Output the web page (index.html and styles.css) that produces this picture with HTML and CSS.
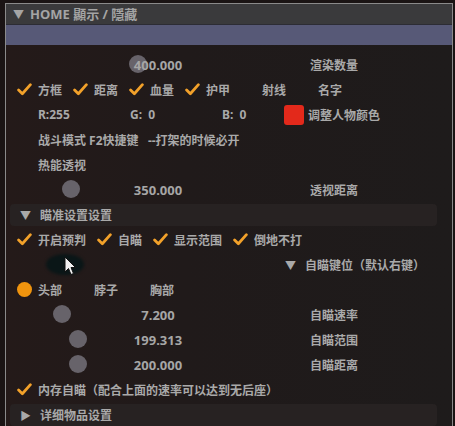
FILE: index.html
```html
<!DOCTYPE html>
<html lang="zh">
<head>
  <meta charset="UTF-8">
  <meta name="viewport" content="width=device-width, initial-scale=1.0">
  <title>HOME 顯示 / 隱藏</title>
  <link rel="stylesheet" href="styles.css">
</head>
<body>
  <div class="window">
    <div class="titlebar"><span class="tri">▼</span>HOME 顯示 / 隱藏</div>
    <div class="band"></div>

    <div class="content">
      <div class="row">
        <div class="slider"><span class="grab" style="left: 113px"></span><span class="value">400.000</span></div>
        <span class="slider-label">渲染数量</span>
      </div>

      <div class="row options">
        <span class="opt"><span class="box"><svg viewBox="0 0 14 12"><polyline points="1.5,6.5 5,10 12.5,1.5"/></svg></span>方框</span>
        <span class="opt"><span class="box"><svg viewBox="0 0 14 12"><polyline points="1.5,6.5 5,10 12.5,1.5"/></svg></span>距离</span>
        <span class="opt"><span class="box"><svg viewBox="0 0 14 12"><polyline points="1.5,6.5 5,10 12.5,1.5"/></svg></span>血量</span>
        <span class="opt"><span class="box"><svg viewBox="0 0 14 12"><polyline points="1.5,6.5 5,10 12.5,1.5"/></svg></span>护甲</span>
        <span class="opt"><span class="box"></span>射线</span>
        <span class="opt"><span class="box"></span>名字</span>
      </div>

      <div class="row indent">
        <span class="rgb rgb-r">R:255</span>
        <span class="rgb">G:&nbsp; 0</span>
        <span class="rgb rgb-b">B:&nbsp; 0</span>
        <span class="swatch"></span>
        <span class="swatch-label">调整人物颜色</span>
      </div>

      <div class="row indent">战斗模式 F2快捷键&nbsp;&nbsp; --打架的时候必开</div>
      <div class="row indent">热能透视</div>

      <div class="row">
        <div class="slider"><span class="grab" style="left: 46px"></span><span class="value">350.000</span></div>
        <span class="slider-label">透视距离</span>
      </div>

      <div class="row header"><span class="tri">▼</span>瞄准设置设置</div>

      <div class="row options">
        <span class="opt"><span class="box"><svg viewBox="0 0 14 12"><polyline points="1.5,6.5 5,10 12.5,1.5"/></svg></span>开启预判</span>
        <span class="opt"><span class="box"><svg viewBox="0 0 14 12"><polyline points="1.5,6.5 5,10 12.5,1.5"/></svg></span>自瞄</span>
        <span class="opt"><span class="box"><svg viewBox="0 0 14 12"><polyline points="1.5,6.5 5,10 12.5,1.5"/></svg></span>显示范围</span>
        <span class="opt"><span class="box"><svg viewBox="0 0 14 12"><polyline points="1.5,6.5 5,10 12.5,1.5"/></svg></span>倒地不打</span>
      </div>

      <div class="row keybind">
        <span class="blob"></span>
        <svg class="cursor" viewBox="0 0 12 20"><path d="M1 1 L1 16 L4.5 12.5 L7 18.5 L9.5 17.5 L7 11.5 L11.5 11.5 Z"/></svg>
        <span class="subnode"><span class="tri">▼</span>自瞄键位（默认右键）</span>
      </div>

      <div class="row options">
        <span class="opt"><span class="box"><span class="radio"></span></span>头部</span>
        <span class="opt"><span class="box"></span>脖子</span>
        <span class="opt"><span class="box"></span>胸部</span>
      </div>

      <div class="row">
        <div class="slider"><span class="grab" style="left: 37px"></span><span class="value">7.200</span></div>
        <span class="slider-label">自瞄速率</span>
      </div>
      <div class="row">
        <div class="slider"><span class="grab" style="left: 53px"></span><span class="value">199.313</span></div>
        <span class="slider-label">自瞄范围</span>
      </div>
      <div class="row">
        <div class="slider"><span class="grab" style="left: 53px"></span><span class="value">200.000</span></div>
        <span class="slider-label">自瞄距离</span>
      </div>

      <div class="row options">
        <span class="opt"><span class="box"><svg viewBox="0 0 14 12"><polyline points="1.5,6.5 5,10 12.5,1.5"/></svg></span>内存自瞄（配合上面的速率可以达到无后座）</span>
      </div>

      <div class="row header"><span class="tri">▶</span>详细物品设置</div>
    </div>
  </div>
</body>
</html>
```

FILE: styles.css
```css
body {
  margin: 0;
  background: #1a1414;
  font-family: 'Noto Sans', 'Noto Sans CJK SC', sans-serif;
  font-size: 12px;
  font-weight: 700;
  color: #a9a9a9;
  overflow: hidden;
}

.window {
  margin: 3px 0 0 5px;
  width: 446px;
  height: 430px;
  border: 1px solid #8a8a8a;
  border-bottom: none;
  background: linear-gradient(90deg, #241a19 0%, #201a1a 40%, #1e1b1b 100%);
}

.titlebar {
  height: 20px;
  line-height: 20px;
  background: #3a3a3c;
  color: #a4a4a4;
  font-size: 13px;
  padding-left: 7px;
  border-bottom: 1px solid #2c2c34;
}

.titlebar .tri {
  display: inline-block;
  width: 17px;
  font-size: 11px;
}

.band {
  height: 20px;
  background: #575977;
}

.content {
  padding: 7px 15px 0 4px;
}

.row {
  height: 25px;
  display: flex;
  align-items: center;
  padding-left: 6px;
  white-space: nowrap;
  position: relative;
}

.indent {
  padding-left: 28px;
}

/* sliders */
.slider {
  position: relative;
  width: 284px;
  height: 25px;
  display: flex;
  align-items: center;
  justify-content: center;
}

.grab {
  position: absolute;
  top: 3px;
  width: 18px;
  height: 18px;
  border-radius: 50%;
  background: #67636a;
}

.value {
  position: relative;
  font-size: 13px;
  color: #a6a6a6;
}

.slider-label {
  margin-left: 10px;
}

/* checkboxes / radios */
.options {
  gap: 10px;
}

.opt {
  display: flex;
  align-items: center;
  gap: 6px;
}

.box {
  width: 16px;
  height: 16px;
  display: flex;
  align-items: center;
  justify-content: center;
}

.box svg {
  width: 15px;
  height: 13px;
  fill: none;
  stroke: #f2a12a;
  stroke-width: 2.6;
  stroke-linecap: round;
  stroke-linejoin: round;
}

.radio {
  width: 15px;
  height: 15px;
  border-radius: 50%;
  background: #f0940e;
}

/* colour row */
.rgb {
  width: 92px;
}

.rgb-b {
  width: 62px;
}

.swatch {
  width: 20px;
  height: 20px;
  border-radius: 3px;
  background: #e3291b;
}

.swatch-label {
  margin-left: 4px;
}

/* collapsing headers */
.header {
  height: 22px;
  margin: 2px 0 1px;
  background: #272222;
  border-radius: 4px;
  padding-left: 10px;
}

.header .tri {
  display: inline-block;
  width: 20px;
  font-size: 11px;
}

.keybind {
  justify-content: flex-end;
  padding-right: 12px;
}

.subnode .tri {
  display: inline-block;
  width: 20px;
  font-size: 11px;
}

.blob {
  position: absolute;
  left: 36px;
  top: 2px;
  width: 38px;
  height: 21px;
  border-radius: 50%;
  background: #0a1617;
  filter: blur(1.5px);
}

.cursor {
  position: absolute;
  left: 54px;
  top: 4px;
  width: 12px;
  height: 20px;
  fill: #f2f2f2;
  stroke: #111;
  stroke-width: 1;
}
```
